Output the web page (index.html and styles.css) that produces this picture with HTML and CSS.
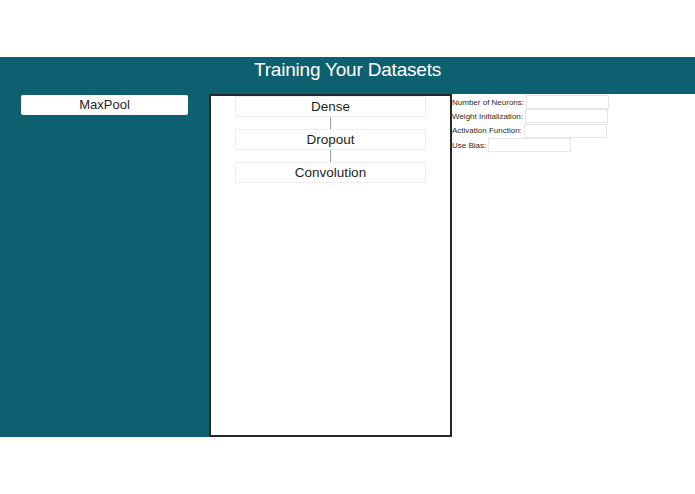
FILE: index.html
```html
<!DOCTYPE html>
<html>
<head>
<meta charset="utf-8">
<link rel="stylesheet" href="styles.css">
</head>
<body>
<div class="spacer"></div>
<header class="banner"><h1 class="title">Training Your Datasets</h1></header>
<main class="workspace">
  <aside class="palette">
    <div class="palette-item">MaxPool</div>
  </aside>
  <section class="canvas">
    <div class="layer">Dense</div>
    <div class="link"></div>
    <div class="layer">Dropout</div>
    <div class="link"></div>
    <div class="layer">Convolution</div>
  </section>
  <form class="props">
    <div class="row"><label>Number of Neurons:</label><input class="field" type="text"></div>
    <div class="row"><label>Weight Initialization:</label><input class="field" type="text"></div>
    <div class="row"><label>Activation Function:</label><input class="field" type="text"></div>
    <div class="row"><label>Use Bias:</label><input class="field" type="text"></div>
  </form>
</main>
</body>
</html>
```

FILE: styles.css
```css
html, body {
  margin: 0;
  padding: 0;
  background: #ffffff;
  font-family: "Liberation Sans", Arial, sans-serif;
  color: #222;
}
.spacer {
  height: 57px;
}
.banner {
  background: #0c6070;
  height: 37px;
  display: flex;
  justify-content: center;
}
.title {
  margin: 0;
  padding-top: 2px;
  font-size: 19px;
  font-weight: normal;
  color: #ffffff;
  line-height: 22px;
  letter-spacing: -0.2px;
}
.workspace {
  display: flex;
  align-items: flex-start;
  height: 343px;
}
.palette {
  width: 209px;
  height: 343px;
  background: #0c6070;
  box-sizing: border-box;
  padding: 1px 21px 0 21px;
}
.palette-item {
  background: #ffffff;
  height: 20px;
  line-height: 19px;
  border-radius: 2px;
  text-align: center;
  font-size: 13px;
  color: #1e1e1e;
}
.canvas {
  width: 243px;
  height: 343px;
  box-sizing: border-box;
  border: 2px solid #23282b;
  background: #ffffff;
  display: flex;
  flex-direction: column;
  align-items: center;
}
.layer {
  width: 191px;
  height: 21px;
  box-sizing: border-box;
  border: 1px solid #ececec;
  text-align: center;
  font-size: 13.5px;
  line-height: 19px;
  color: #1e1e1e;
}
.link {
  width: 1px;
  height: 12px;
  background: #999;
}
.props {
  margin: 0;
  padding-top: 1px;
  display: flex;
  flex-direction: column;
}
.row {
  display: flex;
  align-items: center;
  height: 14.3px;
  font-size: 8px;
  color: #2a2a2a;
}
.row label {
  white-space: nowrap;
}
.field {
  width: 83px;
  height: 14px;
  box-sizing: border-box;
  margin: 0 0 0 2px;
  padding: 0;
  border: 1px solid #e6e6e6;
  background: #fff;
  outline: none;
}
```
